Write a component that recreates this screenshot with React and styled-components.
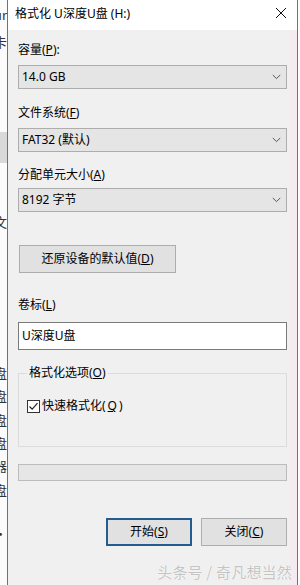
import React from 'react';
import styled, { createGlobalStyle } from 'styled-components';

const GlobalStyle = createGlobalStyle`
  html, body {
    margin: 0;
    padding: 0;
    background: #fdfdfd;
  }
  body {
    font-family: "Noto Sans", "Noto Sans CJK SC", sans-serif;
    font-size: 12px;
    color: #000;
  }
`;

const Screen = styled.div`
  position: relative;
  display: flex;
  width: 300px;
  height: 585px;
  overflow: hidden;
  background: #fdfdfd;
`;

/* what shows of the window behind, cut at the screen edge */
const BackStrip = styled.div`
  width: 7px;
  flex-shrink: 0;
  display: flex;
  flex-direction: column;
  overflow: hidden;
  background: #fbfbfb;
`;

const BackRow = styled.div`
  height: ${(p) => p.h}px;
  flex-shrink: 0;
  display: flex;
  justify-content: flex-end;
  align-items: center;
  white-space: nowrap;
  font-family: "Noto Sans CJK SC", sans-serif;
  font-size: 13px;
  line-height: 16px;
  color: #333;
  background: ${(p) => (p.selected ? '#d9d9d9' : 'transparent')};
`;

const Window = styled.div`
  width: 289px;
  flex-shrink: 0;
  display: flex;
  flex-direction: column;
  border-left: 1px solid #3a8797;
  border-right: 1px solid #3a8797;
  background: #f0f0f0;
`;

const TitleBar = styled.div`
  height: 30px;
  flex-shrink: 0;
  display: flex;
  align-items: center;
  justify-content: space-between;
  padding: 0 8px 0 7px;
  background: #fff;
`;

const Title = styled.span`
  font-size: 12px;
  line-height: 16px;
  margin-top: -3px;
`;

const CloseBox = styled.div`
  width: 16px;
  height: 16px;
  display: flex;
  align-items: center;
  justify-content: center;
  margin-top: -4px;
`;

const Body = styled.div`
  flex: 1;
  display: flex;
  flex-direction: column;
  padding: 12px 10px 0 10px;
  background: linear-gradient(to right, #f0f0f0 0, #f0f0f0 282px, #f4eaf0 282px);
`;

const Label = styled.div`
  line-height: 16px;
  margin-top: ${(p) => p.mt || 0}px;
`;

const Key = styled.span`
  text-decoration: underline;
  text-underline-offset: 1px;
`;

const Combo = styled.div`
  height: 24px;
  box-sizing: border-box;
  margin-top: ${(p) => p.mt || 0}px;
  display: flex;
  align-items: center;
  justify-content: space-between;
  padding: 0 5px 0 3px;
  border: 1px solid #adadad;
  background: #e5e5e5;
  line-height: 16px;
`;

const Button = styled.div`
  box-sizing: border-box;
  width: ${(p) => p.w}px;
  height: 28px;
  margin-top: ${(p) => p.mt || 0}px;
  margin-left: ${(p) => p.ml || 0}px;
  display: flex;
  align-items: center;
  justify-content: center;
  background: #e1e1e1;
  border: ${(p) => (p.focused ? '2px solid #235d8e' : '1px solid #adadad')};
  line-height: 16px;
`;

const TextBox = styled.div`
  height: 28px;
  box-sizing: border-box;
  margin-top: ${(p) => p.mt || 0}px;
  display: flex;
  align-items: center;
  padding: 0 3px;
  border: 1px solid #7a7a7a;
  background: #fff;
  line-height: 16px;
`;

const GroupBox = styled.fieldset`
  margin: 15px 0 0 0;
  padding: 17px 8px 0 8px;
  height: 82px;
  box-sizing: border-box;
  border: 1px solid #dcdcdc;
  min-width: 0;
`;

const Legend = styled.legend`
  padding: 0 2px;
  margin-left: 0;
  line-height: 16px;
  font-size: 12px;
`;

const CheckRow = styled.label`
  display: flex;
  align-items: center;
  gap: 2px;
  line-height: 16px;
`;

const CheckBox = styled.span`
  width: 13px;
  height: 13px;
  box-sizing: border-box;
  border: 1px solid #333;
  background: #fff;
  display: flex;
  align-items: center;
  justify-content: center;
`;

const Progress = styled.div`
  height: 17px;
  box-sizing: border-box;
  margin-top: 17px;
  border: 1px solid #bcbcbc;
  background: #e6e6e6;
`;

const ButtonRow = styled.div`
  display: flex;
  justify-content: flex-end;
  margin-top: 37px;
`;

const Watermark = styled.div`
  position: absolute;
  right: 8px;
  bottom: 4px;
  font-family: "Noto Sans CJK SC", sans-serif;
  font-size: 15px;
  line-height: 18px;
  color: #c4c4c4;
  text-shadow: 0 0 1px #fff, 0 0 1px #fff;
  letter-spacing: 0.2px;
`;

const Chevron = () => (
  <svg width="9" height="6" viewBox="0 0 9 6">
    <path d="M0.8 1 L4.5 4.6 L8.2 1" fill="none" stroke="#555" strokeWidth="1" />
  </svg>
);

const backRows = [
  { h: 8 },
  { h: 14, t: 'ur' },
  { h: 10 },
  { h: 20, t: '卡' },
  { h: 80, t: '' },
  { h: 31, selected: true },
  { h: 50 },
  { h: 18, t: '文' },
  { h: 131 },
  { h: 22, t: '盘' },
  { h: 24, t: '盘' },
  { h: 24, t: '盘' },
  { h: 22, t: '盘' },
  { h: 24, t: '器' },
  { h: 24, t: '盘' },
  { h: 26 },
  { h: 12, t: '·' },
  { h: 52 },
  { h: 12, t: '-' },
];

const App = () => (
  <>
    <GlobalStyle />
    <Screen>
      <BackStrip>
        {backRows.map((r, i) => (
          <BackRow key={i} h={r.h} selected={r.selected}>
            {r.t}
          </BackRow>
        ))}
      </BackStrip>

      <Window>
        <TitleBar>
          <Title>格式化 U深度U盘 (H:)</Title>
          <CloseBox>
            <svg width="12" height="12" viewBox="0 0 12 12">
              <path d="M1 1 L11 11 M11 1 L1 11" stroke="#111" strokeWidth="1" />
            </svg>
          </CloseBox>
        </TitleBar>

        <Body>
          <Label>
            容量(<Key>P</Key>):
          </Label>
          <Combo mt={7}>
            <span>14.0 GB</span>
            <Chevron />
          </Combo>

          <Label mt={16}>
            文件系统(<Key>F</Key>)
          </Label>
          <Combo mt={7}>
            <span>FAT32 (默认)</span>
            <Chevron />
          </Combo>

          <Label mt={15}>
            分配单元大小(<Key>A</Key>)
          </Label>
          <Combo mt={5}>
            <span>8192 字节</span>
            <Chevron />
          </Combo>

          <Button w={157} mt={33} ml={1}>
            还原设备的默认值(<Key>D</Key>)
          </Button>

          <Label mt={24}>
            卷标(<Key>L</Key>)
          </Label>
          <TextBox mt={9}>U深度U盘</TextBox>

          <GroupBox>
            <Legend>
              格式化选项(<Key>O</Key>)
            </Legend>
            <CheckRow>
              <CheckBox>
                <svg width="11" height="11" viewBox="0 0 11 11">
                  <path d="M1.5 5.5 L4.2 8.2 L9.5 2.2" fill="none" stroke="#222" strokeWidth="1.2" />
                </svg>
              </CheckBox>
              快速格式化(<Key>Q</Key>)
            </CheckRow>
          </GroupBox>

          <Progress />

          <ButtonRow>
            <Button w={86} focused>
              开始(<Key>S</Key>)
            </Button>
            <Button w={86} ml={9}>
              关闭(<Key>C</Key>)
            </Button>
          </ButtonRow>
        </Body>
      </Window>
    </Screen>
    <Watermark>头条号 / 奇凡想当然</Watermark>
  </>
);

export default App;
